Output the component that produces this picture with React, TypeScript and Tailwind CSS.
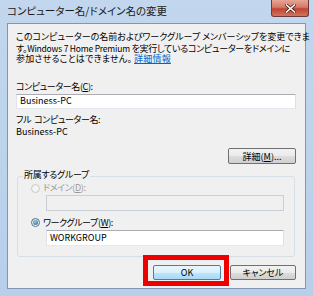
const FONT = "[font-family:'Noto_Sans_CJK_JP','Noto_Sans',sans-serif]";

function Radio({ checked, disabled }: { checked?: boolean; disabled?: boolean }) {
  return (
    <span
      className={`flex h-[9px] w-[9px] items-center justify-center rounded-full border ${
        disabled ? "border-[#c8c8c8] bg-[#f4f4f4]" : "border-[#5a6e80] bg-gradient-to-b from-[#e4e4e4] to-[#ffffff]"
      }`}
    >
      {checked && <span className="h-[5px] w-[5px] rounded-full bg-[radial-gradient(circle_at_40%_35%,#8fd0f0,#1c5a8a)]" />}
    </span>
  );
}

function Button({ children, primary, className = "" }: { children: React.ReactNode; primary?: boolean; className?: string }) {
  return (
    <div
      className={`flex h-[15px] items-center justify-center rounded-[2px] border text-[9px] leading-none ${
        primary
          ? "border-[#3c7fb1] bg-[linear-gradient(#eaf6fd_0%,#d9f0fc_50%,#bee6fd_51%,#a7d9f5_100%)]"
          : "border-[#707070] bg-[linear-gradient(#f2f2f2_0%,#ebebeb_50%,#dddddd_51%,#cfcfcf_100%)]"
      } ${className}`}
    >
      {children}
    </div>
  );
}

export default function App() {
  return (
    <div className={`flex h-[296px] w-[313px] flex-col bg-[linear-gradient(#c2d7ee,#b7cfea)] ${FONT} text-black`}>
      {/* title bar */}
      <div className="flex h-[23px] shrink-0 items-start justify-between">
        <span className="pl-[7px] pt-[4px] text-[10.5px] leading-[14px] text-[#1a1a1a] [font-feature-settings:'palt']">
          コンピューター名/ドメイン名の変更
        </span>
        <div className="mr-[4px] flex h-[17px] w-[38px] items-center justify-center rounded-b-[3px] border border-t-0 border-[#6b3a3a] bg-[linear-gradient(#e8a493_0%,#d47a68_45%,#c2432f_55%,#d1745f_100%)]">
          <svg width="11" height="9" viewBox="0 0 11 9">
            <path d="M1.5 1 L9.5 8 M9.5 1 L1.5 8" stroke="#4a1f1a" strokeWidth="3" strokeLinecap="square" />
            <path d="M1.5 1 L9.5 8 M9.5 1 L1.5 8" stroke="#ffffff" strokeWidth="1.6" strokeLinecap="square" />
          </svg>
        </div>
      </div>

      {/* client area */}
      <div className="ml-[7px] mr-[7px] mb-[7px] flex flex-1 flex-col border border-[#8296ad] bg-[#f0f0f0] px-[8px] pt-[8px] text-[9px] leading-[10.5px] [font-feature-settings:'palt']">
        <div className="whitespace-nowrap">
          <div>このコンピューターの名前およびワークグループ メンバーシップを変更できま</div>
          <div className="tracking-[-0.3px]">
            す。<span className="text-[8.5px] tracking-[-0.2px]">Windows 7 Home Premium</span> を実行しているコンピューターをドメインに
          </div>
          <div className="tracking-[0.2px]">
            参加させることはできません。
            <span className="ml-[2px] text-[#0066cc] underline">詳細情報</span>
          </div>
        </div>

        <div className="mt-[17px] tracking-[-0.4px]">
          コンピューター名(<span className="underline">C</span>):
        </div>
        <div className="mt-[2px] flex h-[15px] w-[280px] items-center border border-[#abadb3] border-b-[#e3e9ef] border-l-[#e2e3ea] border-r-[#dbdfe6] bg-white pl-[3px]">
          Business-PC
        </div>
        <div className="mt-[6px] tracking-[-0.4px]">
          フル<span className="ml-[3px]">コンピューター名:</span>
        </div>
        <div className="mt-[1px]">Business-PC</div>

        <div className="mt-[11px] flex w-[280px] justify-end">
          <Button className="h-[16px] w-[68px]">
            詳細(<span className="underline">M</span>)...
          </Button>
        </div>

        {/* group box */}
        <div className="relative mt-[12px] ml-[1px] h-[81px] w-[278px] rounded-[3px] border border-[#d5dfe5] pl-[13px] pr-[11px] pt-[6px]">
          <span className="absolute left-[5px] top-[-7px] bg-[#f0f0f0] px-[1px] tracking-[-0.3px]">所属するグループ</span>
          <div className="flex items-center gap-[3px] text-[#9a9a9a]">
            <Radio disabled />
            <span className="tracking-[-0.4px]">
              ドメイン(<span className="underline">D</span>):
            </span>
          </div>
          <div className="ml-[15px] mt-[1px] h-[16px] w-[238px] border border-[#c9cfd6] bg-[#f0f0f0]" />
          <div className="mt-[7px] flex items-center gap-[3px]">
            <Radio checked />
            <span className="tracking-[-0.4px]">
              ワークグループ(<span className="underline">W</span>):
            </span>
          </div>
          <div className="ml-[15px] mt-[2px] flex h-[16px] w-[238px] items-center border border-[#abadb3] border-b-[#e3e9ef] border-l-[#e2e3ea] border-r-[#dbdfe6] bg-white pl-[3px]">
            WORKGROUP
          </div>
        </div>

        {/* buttons */}
        <div className="mt-[8px] flex w-[280px] justify-end gap-[9px]">
          <div className="relative">
            <Button primary className="w-[68px]">
              OK
            </Button>
            <div className="pointer-events-none absolute top-[-10px] bottom-[-6px] left-[-10px] right-[-8px] border-[5px] border-[#ee0000]" />
          </div>
          <Button className="w-[66px]">キャンセル</Button>
        </div>
      </div>
    </div>
  );
}
